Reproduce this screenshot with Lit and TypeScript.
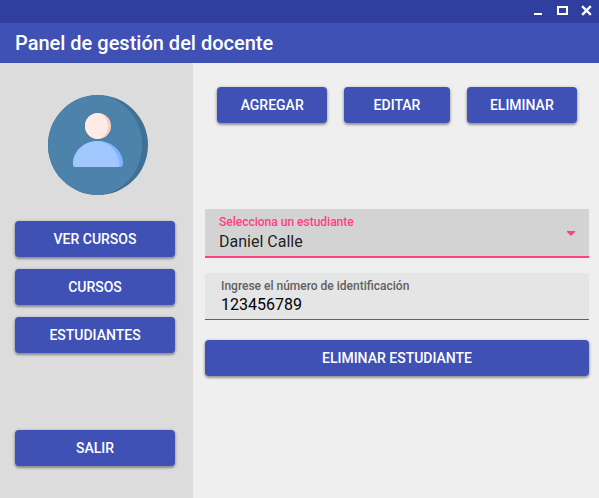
import { LitElement, html, css } from "lit";
import { customElement, state } from "lit/decorators.js";

@customElement("raised-button")
class RaisedButton extends LitElement {
  static styles = css`
    :host {
      display: block;
    }
    .button {
      display: block;
      width: 100%;
      height: 36px;
      padding: 0;
      border: 0;
      border-radius: 4px;
      background: #3f51b5;
      color: #fff;
      font: 500 14px/36px Roboto, sans-serif;
      text-transform: uppercase;
      white-space: nowrap;
      cursor: pointer;
      box-shadow: 0 1px 3px 1px rgba(0, 0, 0, 0.2), 0 2px 2px rgba(0, 0, 0, 0.2);
    }
  `;

  render() {
    return html`<button class="button" type="button"><slot></slot></button>`;
  }
}

@customElement("app-root")
class AppRoot extends LitElement {
  @state() private student = "Daniel Calle";
  @state() private studentId = "123456789";

  static styles = css`
    :host {
      display: flex;
      flex-direction: column;
      min-height: 100vh;
      background: #efefef;
      font-family: Roboto, sans-serif;
      color: rgba(0, 0, 0, 0.87);
    }
    * {
      box-sizing: border-box;
    }
    .window-bar {
      display: flex;
      justify-content: flex-end;
      height: 23px;
      padding-right: 1px;
      background: #303f9f;
    }
    .window-control {
      width: 24px;
      height: 23px;
      padding: 0;
      border: 0;
      background: none;
      color: #fff;
    }
    .window-control svg {
      display: block;
    }
    .header {
      height: 40px;
      padding-left: 15px;
      background: #3f51b5;
      color: #fff;
    }
    .title {
      margin: 0;
      font-size: 20px;
      font-weight: 500;
      line-height: 40px;
    }
    .body {
      display: flex;
      flex: 1;
    }
    .sidebar {
      display: flex;
      flex-direction: column;
      gap: 12px;
      flex: 0 0 193px;
      padding: 32px 18px 32px 15px;
      background: #dcdcdc;
    }
    .avatar {
      display: block;
      width: 100px;
      height: 100px;
      margin: 0 auto 14px 33px;
    }
    .exit {
      margin-top: auto;
    }
    .main {
      flex: 1;
      min-width: 0;
      padding: 24px 10px 24px 12px;
    }
    .actions {
      display: grid;
      grid-template-columns: 22fr 21fr 22fr;
      gap: 17px;
      padding: 0 12px;
      margin-bottom: 86px;
    }
    .field {
      display: flex;
      flex-direction: column;
      position: relative;
      margin-bottom: 15px;
    }
    .label {
      font-size: 12px;
      font-weight: 500;
      line-height: 14px;
    }
    .control {
      width: 100%;
      height: 24px;
      padding: 0;
      border: 0;
      outline: 0;
      background: none;
      appearance: none;
      font: 400 16px/24px Roboto, sans-serif;
      color: inherit;
    }
    .select-field {
      gap: 1px;
      padding: 6px 14px 2px;
      background: #d3d3d3;
      border-bottom: 2px solid #ff4081;
    }
    .select-field .label {
      color: #ff4081;
    }
    .arrow {
      position: absolute;
      right: 14px;
      top: 22px;
      pointer-events: none;
    }
    .text-field {
      padding: 6px 16px 2px;
      margin-bottom: 20px;
      background: #e5e5e5;
      border-bottom: 1px solid #616161;
    }
    .text-field .label {
      color: #616161;
    }
    .text-field .control {
      color: #000;
    }
  `;

  render() {
    return html`
      <div class="window-bar">
        <button class="window-control" aria-label="Minimizar">
          <svg width="24" height="23"><path d="M8 13h8v2H8z" fill="currentColor" /></svg>
        </button>
        <button class="window-control" aria-label="Maximizar">
          <svg width="24" height="23">
            <path d="M7 6h11v9H7zM9 8v5h7V8z" fill="currentColor" fill-rule="evenodd" />
          </svg>
        </button>
        <button class="window-control" aria-label="Cerrar">
          <svg width="24" height="23">
            <path d="M9 7l7 7M16 7l-7 7" stroke="currentColor" stroke-width="2.4" stroke-linecap="square" />
          </svg>
        </button>
      </div>
      <header class="header"><h1 class="title">Panel de gestión del docente</h1></header>
      <div class="body">
        <nav class="sidebar">
          <svg class="avatar" viewBox="0 0 100 100" aria-hidden="true">
            <circle cx="50" cy="50" r="50" fill="#407093" />
            <path d="M50 0C75 2 94 23 94 50S75 98 50 100A50 50 0 0 1 50 0z" fill="#4d82ab" />
            <circle cx="50" cy="31" r="13" fill="#ffcebf" />
            <path d="M50 18C56 19 60 25 60 31S56 43 50 44A13 13 0 0 1 50 18z" fill="#ffebe6" />
            <path d="M50 46c14 0 25 10 25 23q0 3-3 3H28q-3 0-3-3c0-13 11-23 25-23z" fill="#7db3ff" />
            <path d="M50 46c12 1 21 12 21.500 24q0 2-2 2H28q-3 0-3-3c0-13 11-23 25-23z" fill="#a0c8ff" />
          </svg>
          <raised-button>Ver cursos</raised-button>
          <raised-button>Cursos</raised-button>
          <raised-button>Estudiantes</raised-button>
          <raised-button class="exit">Salir</raised-button>
        </nav>
        <main class="main">
          <div class="actions">
            <raised-button>Agregar</raised-button>
            <raised-button>Editar</raised-button>
            <raised-button>Eliminar</raised-button>
          </div>
          <div class="field select-field">
            <label class="label" for="student">Selecciona un estudiante</label>
            <select class="control" id="student">
              <option>${this.student}</option>
            </select>
            <svg class="arrow" width="8" height="5" aria-hidden="true">
              <path d="M0 0h8v1L4 5 0 1z" fill="#ff4081" />
            </svg>
          </div>
          <div class="field text-field">
            <label class="label" for="student-id">Ingrese el número de identificación</label>
            <input class="control" id="student-id" type="text" .value=${this.studentId} />
          </div>
          <raised-button>Eliminar estudiante</raised-button>
        </main>
      </div>
    `;
  }
}
